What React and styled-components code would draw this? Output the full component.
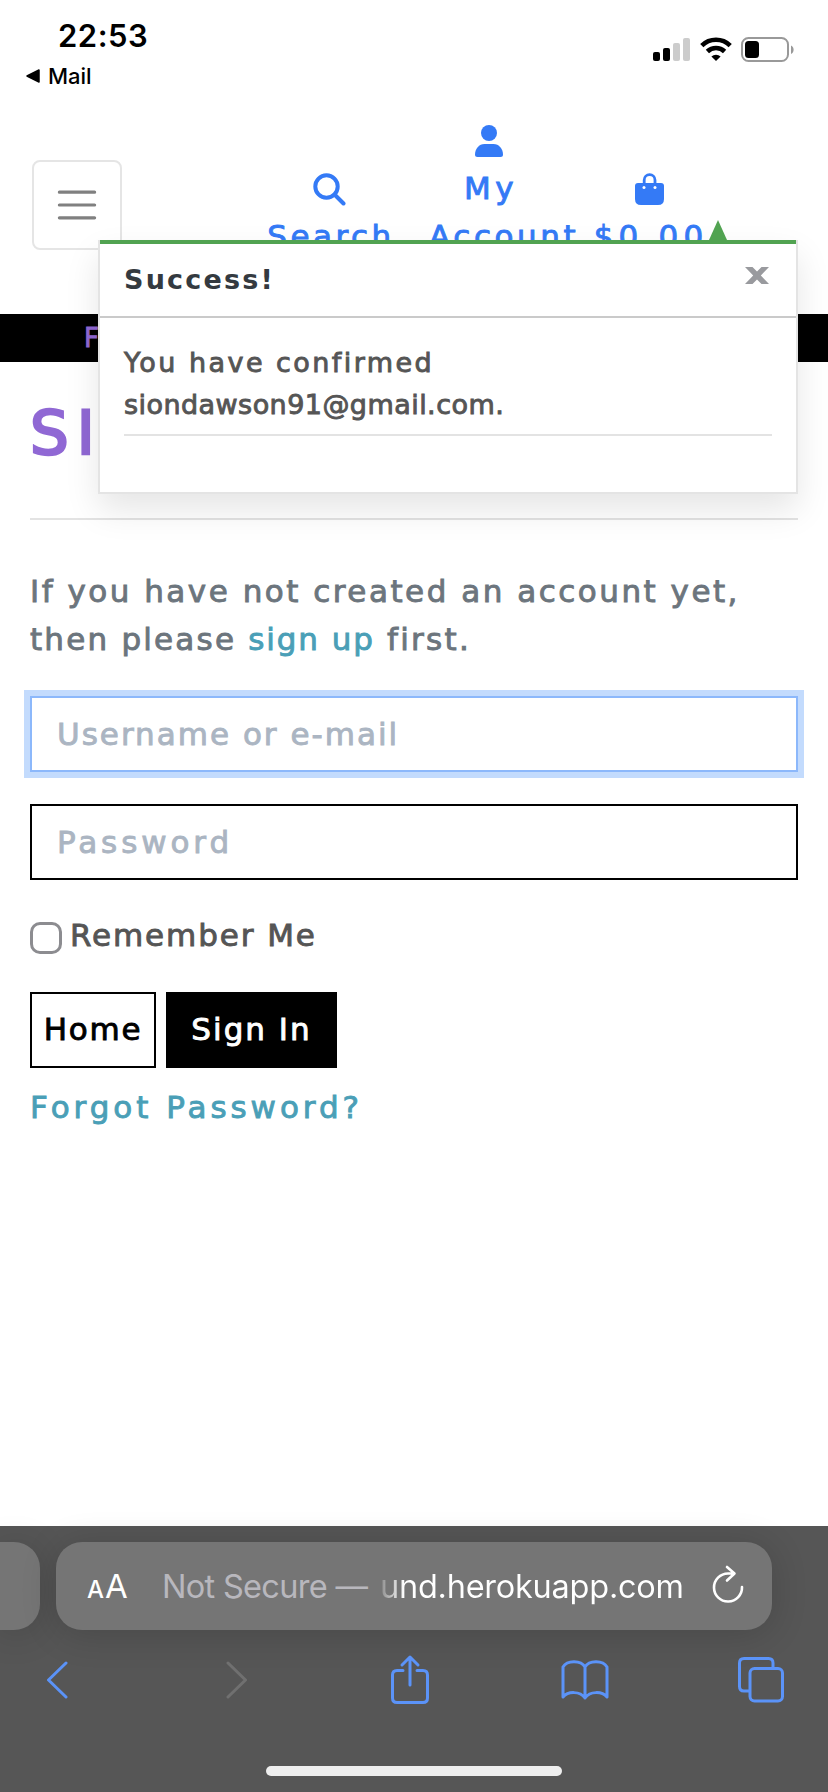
import React from "react";
import styled, { createGlobalStyle } from "styled-components";

const Global = createGlobalStyle`
  *, *::before, *::after { box-sizing: border-box; }
  body { margin: 0; background: #fff; }
`;

const Page = styled.div`
  position: relative;
  display: flex;
  flex-direction: column;
  width: 828px;
  height: 1792px;
  overflow: hidden;
  background: #fff;
  color: #555;
  font: 31px/48px "DejaVu Sans", sans-serif;
`;

/* Wide display lettering; $track is the letter spacing in px. */
const Label = styled.span`
  letter-spacing: ${(p) => p.$track || 0}px;
  -webkit-text-stroke: 0.9px currentColor;
  white-space: nowrap;
`;

const StatusBar = styled.div`
  display: flex;
  justify-content: space-between;
  height: 110px;
  padding: 0 34px 0 26px;
  color: #000;
  font-family: Inter, sans-serif;
`;

const StatusLeft = styled.div`
  display: flex;
  flex-direction: column;
`;

const Clock = styled.div`
  margin: 16px 0 0 32px;
  font-size: 31px;
  font-weight: 600;
  line-height: 40px;
  letter-spacing: 0.5px;
`;

const BackLink = styled.div`
  display: flex;
  align-items: center;
  gap: 8px;
  margin-top: 5px;
  font-size: 22px;
  font-weight: 500;
  line-height: 30px;
`;

const StatusIcons = styled.div`
  display: flex;
  align-items: flex-start;
  gap: 9px;
  padding-top: 37px;
`;

const SiteHeader = styled.header`
  display: flex;
  align-items: flex-start;
  height: 204px;
  padding: 7px 0 0 32px;
`;

const MenuButton = styled.button`
  display: flex;
  align-items: center;
  justify-content: center;
  width: 90px;
  height: 90px;
  margin: 43px 144px 0 0;
  padding: 0;
  border: 2px solid #e5e5e5;
  border-radius: 8px;
  background: transparent;
`;

const Nav = styled.nav`
  display: flex;
  align-items: flex-end;
  gap: 37px;
  height: 143px;
`;

const NavLink = styled.a`
  display: flex;
  flex-direction: column;
  align-items: center;
  width: ${(p) => p.$width}px;
  color: #347af6;
  ${Label} { margin-right: -4px; }
`;

const NavIcon = styled.span`
  display: flex;
  align-items: center;
  justify-content: center;
  height: 48px;
  padding-top: 2px;
`;

/* A word wider than its link runs out to the right of it. */
const WideLabel = styled(Label)`
  align-self: flex-start;
`;

const Banner = styled.div`
  height: 48px;
  flex: none;
  padding-left: 84px;
  background: #000;
  color: #9068d4;
  font-size: 26px;
  line-height: 49px;
`;

const Main = styled.main`
  display: flex;
  flex: 1;
  flex-direction: column;
  align-items: flex-start;
  padding: 32px 30px 0;
`;

const Title = styled.h1`
  width: 100%;
  height: 126px;
  margin: 0 0 47px;
  border-bottom: 2px solid #e3e3e3;
  color: #9068d4;
  font-size: 61px;
  font-weight: 400;
  line-height: 77px;
  ${Label} { -webkit-text-stroke-width: 2.6px; }
`;

const Intro = styled.p`
  margin: 0 0 33px;
  color: #6c757d;
`;

const TextLink = styled.a`
  color: #4a9fb7;
`;

const Field = styled.label`
  display: flex;
  align-items: center;
  width: 100%;
  height: 76px;
  margin-bottom: ${(p) => p.$gap}px;
  padding-left: 25px;
  border: 2px solid ${(p) => (p.$focused ? "#8cb8fb" : "#000")};
  box-shadow: ${(p) => (p.$focused ? "0 0 0 6px #c3dbfd" : "none")};
  color: #abb5c2;
`;

const CheckRow = styled.label`
  display: flex;
  align-items: center;
  height: 48px;
  gap: 8px;
  margin-bottom: 33px;
`;

const CheckBox = styled.span`
  width: 32px;
  height: 32px;
  margin-top: 6px;
  border: 3px solid #8c8c90;
  border-radius: 10px;
`;

const Buttons = styled.div`
  display: flex;
  gap: 10px;
  margin-bottom: 15px;
`;

const Button = styled.button`
  width: ${(p) => p.$width}px;
  height: 76px;
  padding: 0 0 2px;
  border: 2px solid #000;
  background: ${(p) => (p.$solid ? "#000" : "#fff")};
  color: ${(p) => (p.$solid ? "#fff" : "#000")};
  font: inherit;
`;

const Toast = styled.section`
  position: absolute;
  top: 240px;
  left: 98px;
  width: 700px;
  height: 254px;
  border: 2px solid #e4e4e4;
  border-top: 0;
  background: #fff;
  box-shadow: 0 16px 32px rgba(0, 0, 0, 0.1);
  font-size: 27px;
  line-height: 42px;
`;

const ToastArrow = styled.span`
  position: absolute;
  top: -20px;
  left: 609px;
  border: 9px solid transparent;
  border-top: 0;
  border-bottom: 20px solid #51a351;
`;

const ToastHeader = styled.div`
  display: flex;
  justify-content: space-between;
  height: 78px;
  padding: 15px 27px 0 24px;
  border-top: 4px solid #51a351;
  border-bottom: 2px solid #cacaca;
  color: #343a40;
  font-weight: 700;
  ${Label} { -webkit-text-stroke-width: 0; }
`;

const CloseIcon = styled.svg`
  margin-top: 8px;
`;

const ToastBody = styled.div`
  height: 118px;
  margin: 0 24px;
  padding-top: 24px;
  border-bottom: 2px solid #e3e3e3;
`;

const BrowserBar = styled.footer`
  display: flex;
  flex-direction: column;
  align-items: center;
  flex: none;
  height: 266px;
  padding-top: 16px;
  background: #565656;
  font-family: Inter, sans-serif;
`;

const TabRow = styled.div`
  display: flex;
  width: 100%;
  height: 88px;
  gap: 16px;
`;

const PreviousTab = styled.div`
  width: 40px;
  border-radius: 0 26px 26px 0;
  background: #757575;
  box-shadow: 0 4px 36px rgba(0, 0, 0, 0.16);
`;

const AddressBar = styled.div`
  display: flex;
  align-items: center;
  width: 716px;
  padding: 2px 0 0 31px;
  border-radius: 26px;
  background: #757575;
  box-shadow: 0 4px 36px rgba(0, 0, 0, 0.16);
  color: #fff;
  font-size: 32.5px;
  white-space: nowrap;
`;

const ReaderControl = styled.span`
  display: flex;
  align-items: baseline;
  gap: 1px;
  width: 75px;
  padding-top: 2px;
  font-size: 33px;
  small { font-size: 24px; font-weight: 500; }
`;

const Security = styled.span`
  width: 218px;
  color: #b8b7bd;
  letter-spacing: -0.7px;
`;

const Domain = styled.span`
  width: 332px;
  background: linear-gradient(90deg, #8b8b8b 0, #fff 24px);
  background-clip: text;
  color: transparent;
  letter-spacing: -0.25px;
`;

const ReloadIcon = styled.svg`
  margin-bottom: 6px;
`;

const Toolbar = styled.div`
  display: flex;
  align-items: center;
  width: 100%;
  height: 100px;
  padding-left: 46px;
`;

const ToolIcon = styled.svg`
  flex: none;
  margin-left: ${(p) => p.$gap || 0}px;
  fill: none;
  stroke: ${(p) => (p.$disabled ? "#707070" : "#5b93f8")};
  stroke-width: 3;
  stroke-linecap: round;
  stroke-linejoin: round;
`;

const ShareIcon = styled(ToolIcon)`
  margin-bottom: 2px;
`;

const HomeIndicator = styled.div`
  width: 296px;
  height: 10px;
  margin-top: 36px;
  border-radius: 5px;
  background: #eee;
`;

const SignalIcon = () => (
  <svg width="38" height="24" viewBox="0 0 38 24">
    <rect x="0" y="15" width="7" height="9" rx="2" />
    <rect x="10" y="11" width="7" height="13" rx="2" />
    <rect x="20" y="6" width="7" height="18" rx="2" fill="#ccc" />
    <rect x="30" y="1" width="7" height="23" rx="2" fill="#ccc" />
  </svg>
);

const WifiIcon = () => (
  <svg width="32" height="24" viewBox="0 0 32 24">
    <g fill="none" stroke="#000" strokeWidth="4.6">
      <path d="M1.8 8.6a20.3 20.3 0 0 1 28.4 0" />
      <path d="M7.4 14.5a12.2 12.2 0 0 1 17.2 0" />
    </g>
    <path d="M11.4 19.5a6.6 6.6 0 0 1 9.2 0L16 24z" />
  </svg>
);

const BatteryIcon = () => (
  <svg width="53" height="26" viewBox="0 0 53 26">
    <rect x="1" y="1" width="46" height="23" rx="6.5" fill="none" stroke="#999" strokeWidth="2" />
    <rect x="4" y="4" width="14" height="17" rx="3.5" />
    <path d="M50 8.5c3.5 1.5 3.5 7 0 8.5z" fill="#999" />
  </svg>
);

const SearchIcon = () => (
  <svg width="33" height="33" viewBox="0 0 33 33" fill="none" stroke="currentColor" strokeWidth="4">
    <circle cx="13.5" cy="13.5" r="11.2" />
    <path d="M21.5 21.5l9 9" strokeLinecap="round" />
  </svg>
);

const UserIcon = () => (
  <svg width="28" height="32" viewBox="0 0 28 32" fill="currentColor">
    <circle cx="14" cy="8" r="8" />
    <path d="M9.5 19h9C24 19 28 24 28 29.5 28 31.2 27.2 32 25.5 32h-23C.8 32 0 31.2 0 29.5 0 24 4 19 9.5 19z" />
  </svg>
);

const BagIcon = () => (
  <svg width="29" height="32" viewBox="0 0 29 32" fill="currentColor">
    <path d="M9.2 13V7a5.4 5.4 0 0 1 10.8 0v6" fill="none" stroke="currentColor" strokeWidth="2.8" />
    <path d="M3 10h23q3 0 3 3v13q0 6-6 6H6q-6 0-6-6V13q0-3 3-3z" />
    <circle cx="9" cy="14.5" r="1.5" fill="#fff" />
    <circle cx="20" cy="14.5" r="1.5" fill="#fff" />
  </svg>
);

export default function App() {
  return (
    <Page>
      <Global />
      <StatusBar>
        <StatusLeft>
          <Clock>22:53</Clock>
          <BackLink>
            <svg width="14" height="14" viewBox="0 0 14 14">
              <path d="M13 1v12L1 7z" stroke="#000" strokeWidth="1.5" strokeLinejoin="round" />
            </svg>
            Mail
          </BackLink>
        </StatusLeft>
        <StatusIcons>
          <SignalIcon />
          <WifiIcon />
          <BatteryIcon />
        </StatusIcons>
      </StatusBar>

      <SiteHeader>
        <MenuButton aria-label="Menu">
          <svg width="48" height="48" viewBox="0 0 30 30" stroke="#808080" strokeWidth="2" strokeLinecap="round">
            <path d="M4 7h22M4 15h22M4 23h22" />
          </svg>
        </MenuButton>
        <Nav>
          <NavLink $width={126}>
            <NavIcon><SearchIcon /></NavIcon>
            <Label $track={3.5}>Search</Label>
          </NavLink>
          <NavLink $width={120}>
            <NavIcon><UserIcon /></NavIcon>
            <Label $track={4.5}>My</Label>
            <WideLabel $track={3.6}>Account</WideLabel>
          </NavLink>
          <NavLink $width={126}>
            <NavIcon><BagIcon /></NavIcon>
            <Label $track={5.2}>$0.00</Label>
          </NavLink>
        </Nav>
      </SiteHeader>

      <Banner><Label>F</Label></Banner>

      <Main>
        <Title><Label $track={8}>SI</Label></Title>
        <Intro>
          <Label $track={2.5}>If you have not created an account yet,</Label>
          <br />
          <Label $track={2.2}>then please </Label>
          <TextLink><Label $track={1.9}>sign up</Label></TextLink>
          <Label $track={2.3}> first.</Label>
        </Intro>
        <Field $focused $gap={32}><Label $track={2}>Username or e-mail</Label></Field>
        <Field $gap={31}><Label $track={3.9}>Password</Label></Field>
        <CheckRow>
          <CheckBox />
          <Label $track={1.9}>Remember Me</Label>
        </CheckRow>
        <Buttons>
          <Button $width={126}><Label $track={1.8}>Home</Label></Button>
          <Button $width={171} $solid><Label $track={2}>Sign In</Label></Button>
        </Buttons>
        <TextLink><Label $track={3.95}>Forgot Password?</Label></TextLink>
      </Main>

      <Toast>
        <ToastArrow />
        <ToastHeader>
          <Label $track={2.2}>Success!</Label>
          <CloseIcon width="24" height="17" viewBox="0 0 24 17" fill="#999a9e">
            <path d="M0 0h7.500L12 4.500 16.500 0H24L15.800 8.500 24 17h-7.500L12 12.500 7.500 17H0L8.200 8.500z" />
          </CloseIcon>
        </ToastHeader>
        <ToastBody>
          <Label $track={2.45}>You have confirmed</Label>
          <br />
          <Label $track={0.45}>siondawson91@gmail.com.</Label>
        </ToastBody>
      </Toast>

      <BrowserBar>
        <TabRow>
          <PreviousTab />
          <AddressBar>
            <ReaderControl><small>A</small>A</ReaderControl>
            <Security>Not Secure —</Security>
            <Domain>und.herokuapp.com</Domain>
            <ReloadIcon width="32" height="38" viewBox="0 0 32 38" fill="none" stroke="#fff" strokeWidth="2.6" strokeLinecap="round" strokeLinejoin="round">
              <path d="M22 8.500H16A14 14 0 1 0 30 22M15 2l7.500 6.500L15 15.500" />
            </ReloadIcon>
          </AddressBar>
        </TabRow>
        <Toolbar>
          <ToolIcon width="24" height="38" viewBox="0 0 24 38">
            <path d="M20 2L2.500 19 20 36" />
          </ToolIcon>
          <ToolIcon $gap={155} $disabled width="24" height="38" viewBox="0 0 24 38">
            <path d="M3 2l17.500 17L3 36" />
          </ToolIcon>
          <ShareIcon $gap={141} width="40" height="50" viewBox="0 0 40 50">
            <path d="M13 16.500H7q-4.500 0-4.500 4.500v23q0 4.500 4.500 4.500h26q4.500 0 4.500-4.500V21q0-4.500-4.500-4.500h-6M20 31V3M12 11l8-8 8 8" />
          </ShareIcon>
          <ToolIcon $gap={131} width="48" height="40" viewBox="0 0 48 40">
            <path d="M24 7C20 0 6 0 2 7v30c5-6 17-6 22 1 5-7 17-7 22-1V7C42 0 28 0 24 7zv31" />
          </ToolIcon>
          <ToolIcon $gap={129} width="46" height="46" viewBox="0 0 46 46">
            <path d="M11 34H6q-4.500 0-4.500-4.500V6Q1.500 1.500 6 1.500h24.500Q35 1.500 35 6v5" />
            <rect x="12" y="11.5" width="32.5" height="32.5" rx="4.5" />
          </ToolIcon>
        </Toolbar>
        <HomeIndicator />
      </BrowserBar>
    </Page>
  );
}
